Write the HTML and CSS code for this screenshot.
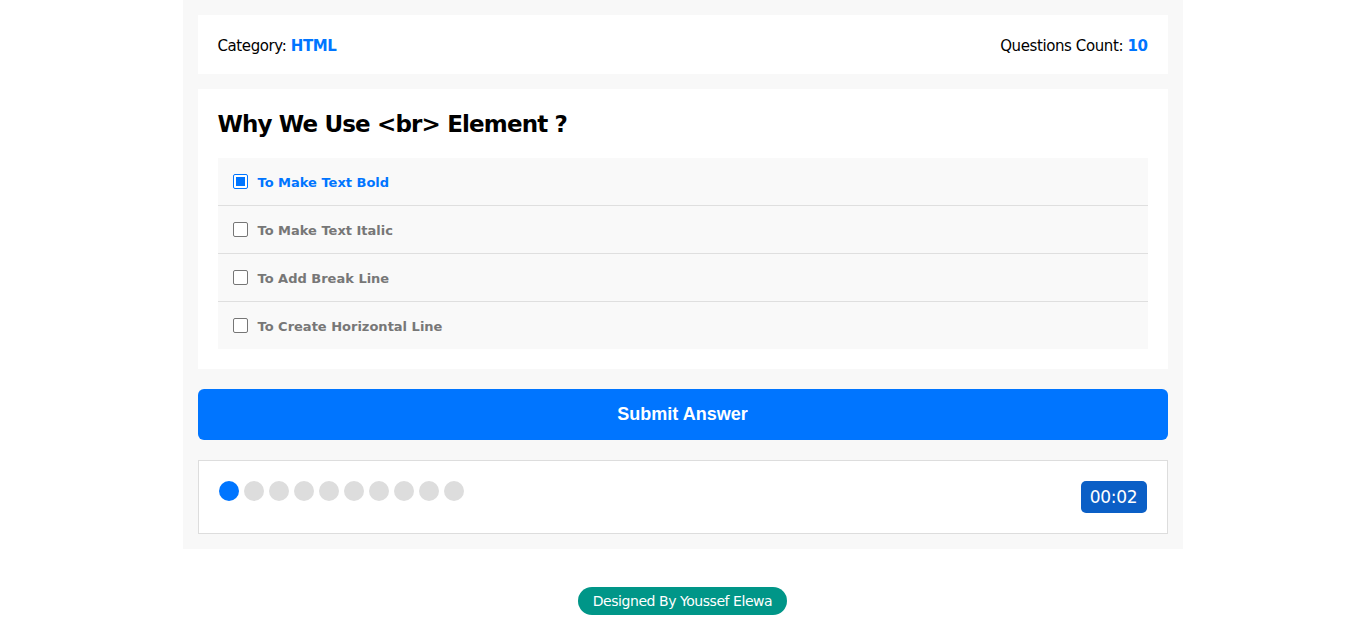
FILE: index.html
```html
<!DOCTYPE html>
<html lang="en">
<head>
<meta charset="UTF-8">
<title>Quiz App</title>
<link rel="stylesheet" href="styles.css">
</head>
<body>
<div class="quiz-app">
  <div class="quiz-info">
    <div class="category">Category: <span>HTML</span></div>
    <div class="count">Questions Count: <span>10</span></div>
  </div>
  <div class="quiz-area">
    <h2>Why We Use &lt;br&gt; Element ?</h2>
    <div class="answers-area">
      <div class="answer">
        <span class="check checked"></span>
        <label class="selected">To Make Text Bold</label>
      </div>
      <div class="answer">
        <span class="check"></span>
        <label>To Make Text Italic</label>
      </div>
      <div class="answer">
        <span class="check"></span>
        <label>To Add Break Line</label>
      </div>
      <div class="answer">
        <span class="check"></span>
        <label>To Create Horizontal Line</label>
      </div>
    </div>
  </div>
  <button class="submit-button">Submit Answer</button>
  <div class="bullets">
    <div class="spans">
      <span class="on"></span><span></span><span></span><span></span><span></span><span></span><span></span><span></span><span></span><span></span>
    </div>
    <div class="countdown">00:02</div>
  </div>
</div>
<div class="footer"><span>Designed By Youssef Elewa</span></div>
</body>
</html>
```

FILE: styles.css
```css
* { box-sizing: border-box; }
body {
  margin: 0;
  font-family: Tahoma, "DejaVu Sans", sans-serif;
  background: #fff;
}
.quiz-app {
  width: 1000px;
  margin: 0 auto;
  background: #f8f8f8;
  padding: 15px;
}
.quiz-info {
  display: flex;
  justify-content: space-between;
  align-items: center;
  background: #fff;
  padding: 20px;
  height: 59px;
  font-size: 15px;
  letter-spacing: -0.4px;
}
.quiz-info > div {
  padding-top: 2px;
}
.quiz-info span {
  color: #0075ff;
  font-weight: bold;
}
.quiz-area {
  background: #fff;
  padding: 20px;
  margin-top: 15px;
}
.quiz-area h2 {
  margin: 0 0 20px;
  font-size: 23px;
  line-height: 29px;
  padding-top: 1px;
  height: 29px;
  letter-spacing: -0.85px;
}
.answer {
  background: #f9f9f9;
  padding: 15px 15px;
  height: 48px;
  display: flex;
  align-items: center;
  border-bottom: 1px solid #dfdfdf;
}
.answer:last-child {
  border-bottom: none;
  height: 47px;
}
.check {
  width: 15px;
  height: 15px;
  border: 1px solid #767676;
  border-radius: 2px;
  background: #fff;
  margin-right: 10px;
  position: relative;
}
.check.checked {
  border-color: #0075ff;
}
.check.checked::after {
  content: "";
  position: absolute;
  left: 2px;
  top: 2px;
  width: 9px;
  height: 9px;
  background: #0075ff;
}
.answer label {
  font-size: 13px;
  font-weight: bold;
  color: #777;
  padding-top: 2px;
}
.answer label.selected {
  color: #0075ff;
}
.submit-button {
  display: block;
  width: 100%;
  height: 51px;
  margin: 20px 0;
  border: none;
  border-radius: 6px;
  background: #0075ff;
  color: #fff;
  font-family: "Liberation Sans", Arial, sans-serif;
  font-weight: bold;
  font-size: 18px;
}
.bullets {
  display: flex;
  justify-content: space-between;
  align-items: flex-start;
  border: 1px solid #ddd;
  background: #fff;
  padding: 20px;
  height: 74px;
}
.spans {
  display: flex;
  gap: 5px;
}
.spans span {
  width: 20px;
  height: 20px;
  border-radius: 50%;
  background: #ddd;
}
.spans span.on {
  background: #0075ff;
}
.countdown {
  background: #0b5fc6;
  color: #fff;
  border-radius: 5px;
  height: 32px;
  width: 66px;
  display: flex;
  align-items: center;
  justify-content: center;
  font-size: 17px;
  letter-spacing: -0.3px;
}
.footer {
  text-align: center;
  margin-top: 38px;
}
.footer span {
  display: inline-block;
  background: #009688;
  color: #fff;
  border-radius: 14px;
  padding: 0 15px;
  height: 28px;
  line-height: 29px;
  font-size: 14px;
  letter-spacing: -0.45px;
}
```
